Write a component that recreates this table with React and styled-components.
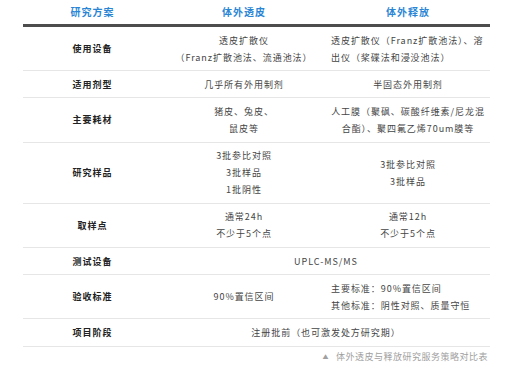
import React from 'react'
import styled, { createGlobalStyle } from 'styled-components'

const GlobalStyle = createGlobalStyle`
  html, body {
    margin: 0;
    padding: 0;
    background: #fff;
  }
  body {
    font-family: "Noto Sans CJK SC", "Noto Sans", sans-serif;
  }
`

const rows = [
  {
    label: '使用设备',
    skin: ['透皮扩散仪', '（Franz扩散池法、流通池法）'],
    release: ['透皮扩散仪（Franz扩散池法）、溶', '出仪（桨碟法和浸没池法）'],
    releaseAlign: 'left',
  },
  { label: '适用剂型', skin: ['几乎所有外用制剂'], release: ['半固态外用制剂'] },
  {
    label: '主要耗材',
    skin: ['猪皮、兔皮、', '鼠皮等'],
    release: ['人工膜（聚砜、碳酸纤维素/尼龙混', '合酯）、聚四氟乙烯70um膜等'],
  },
  {
    label: '研究样品',
    skin: ['3批参比对照', '3批样品', '1批阴性'],
    release: ['3批参比对照', '3批样品'],
  },
  {
    label: '取样点',
    skin: ['通常24h', '不少于5个点'],
    release: ['通常12h', '不少于5个点'],
  },
  { label: '测试设备', both: 'UPLC-MS/MS' },
  {
    label: '验收标准',
    skin: ['90%置信区间'],
    release: ['主要标准：90%置信区间', '其他标准：阴性对照、质量守恒'],
    releaseAlign: 'left',
  },
  { label: '项目阶段', both: '注册批前（也可激发处方研究期）' },
]

function Lines({ items }) {
  return items.map((t, i) => (
    <React.Fragment key={i}>
      {i > 0 && <br />}
      {t}
    </React.Fragment>
  ))
}

function App() {
  return (
    <Page>
      <GlobalStyle />
      <Table>
        <colgroup>
          <col style={{ width: 139 }} />
          <col style={{ width: 164 }} />
          <col style={{ width: 164 }} />
        </colgroup>
        <thead>
          <tr>
            <HeadCell>研究方案</HeadCell>
            <HeadCell>体外透皮</HeadCell>
            <HeadCell>体外释放</HeadCell>
          </tr>
        </thead>
        <tbody>
          {rows.map((r) => (
            <tr key={r.label}>
              <Label>{r.label}</Label>
              {r.both ? (
                <Cell colSpan={2}>{r.both}</Cell>
              ) : (
                <>
                  <Cell>
                    <Lines items={r.skin} />
                  </Cell>
                  <Cell align={r.releaseAlign}>
                    <Lines items={r.release} />
                  </Cell>
                </>
              )}
            </tr>
          ))}
        </tbody>
      </Table>
      <Caption>
        <Arrow>▲</Arrow>
        体外透皮与释放研究服务策略对比表
      </Caption>
    </Page>
  )
}

export default App

const Page = styled.div`
  width: 518px;
  height: 365px;
  padding-left: 23px;
  box-sizing: border-box;
  overflow: hidden;
`

const Table = styled.table`
  width: 467px;
  table-layout: fixed;
  border-collapse: collapse;
`

const HeadCell = styled.th`
  height: 24px;
  padding: 0;
  font-size: 10px;
  line-height: 16px;
  font-weight: 700;
  letter-spacing: 1px;
  color: #2a86d5;
  text-align: center;
  vertical-align: middle;
  border-bottom: 3px solid #4d4d4d;
`

const Cell = styled.td`
  padding: 4.6px 5px;
  font-size: 9px;
  line-height: 17px;
  letter-spacing: 0.95px;
  color: #454545;
  text-align: ${(p) => p.align || 'center'};
  vertical-align: middle;
  border-bottom: 1px solid #e6e6e6;
`

const Label = styled(Cell)`
  font-weight: 700;
  color: #222;
  text-align: center;
`

const Caption = styled.div`
  width: 465px;
  margin-top: 3px;
  text-align: right;
  font-size: 9px;
  line-height: 14px;
  letter-spacing: 0.5px;
  color: #a0a0a0;
`

const Arrow = styled.span`
  font-size: 6px;
  margin-right: 7px;
  vertical-align: 1px;
`
